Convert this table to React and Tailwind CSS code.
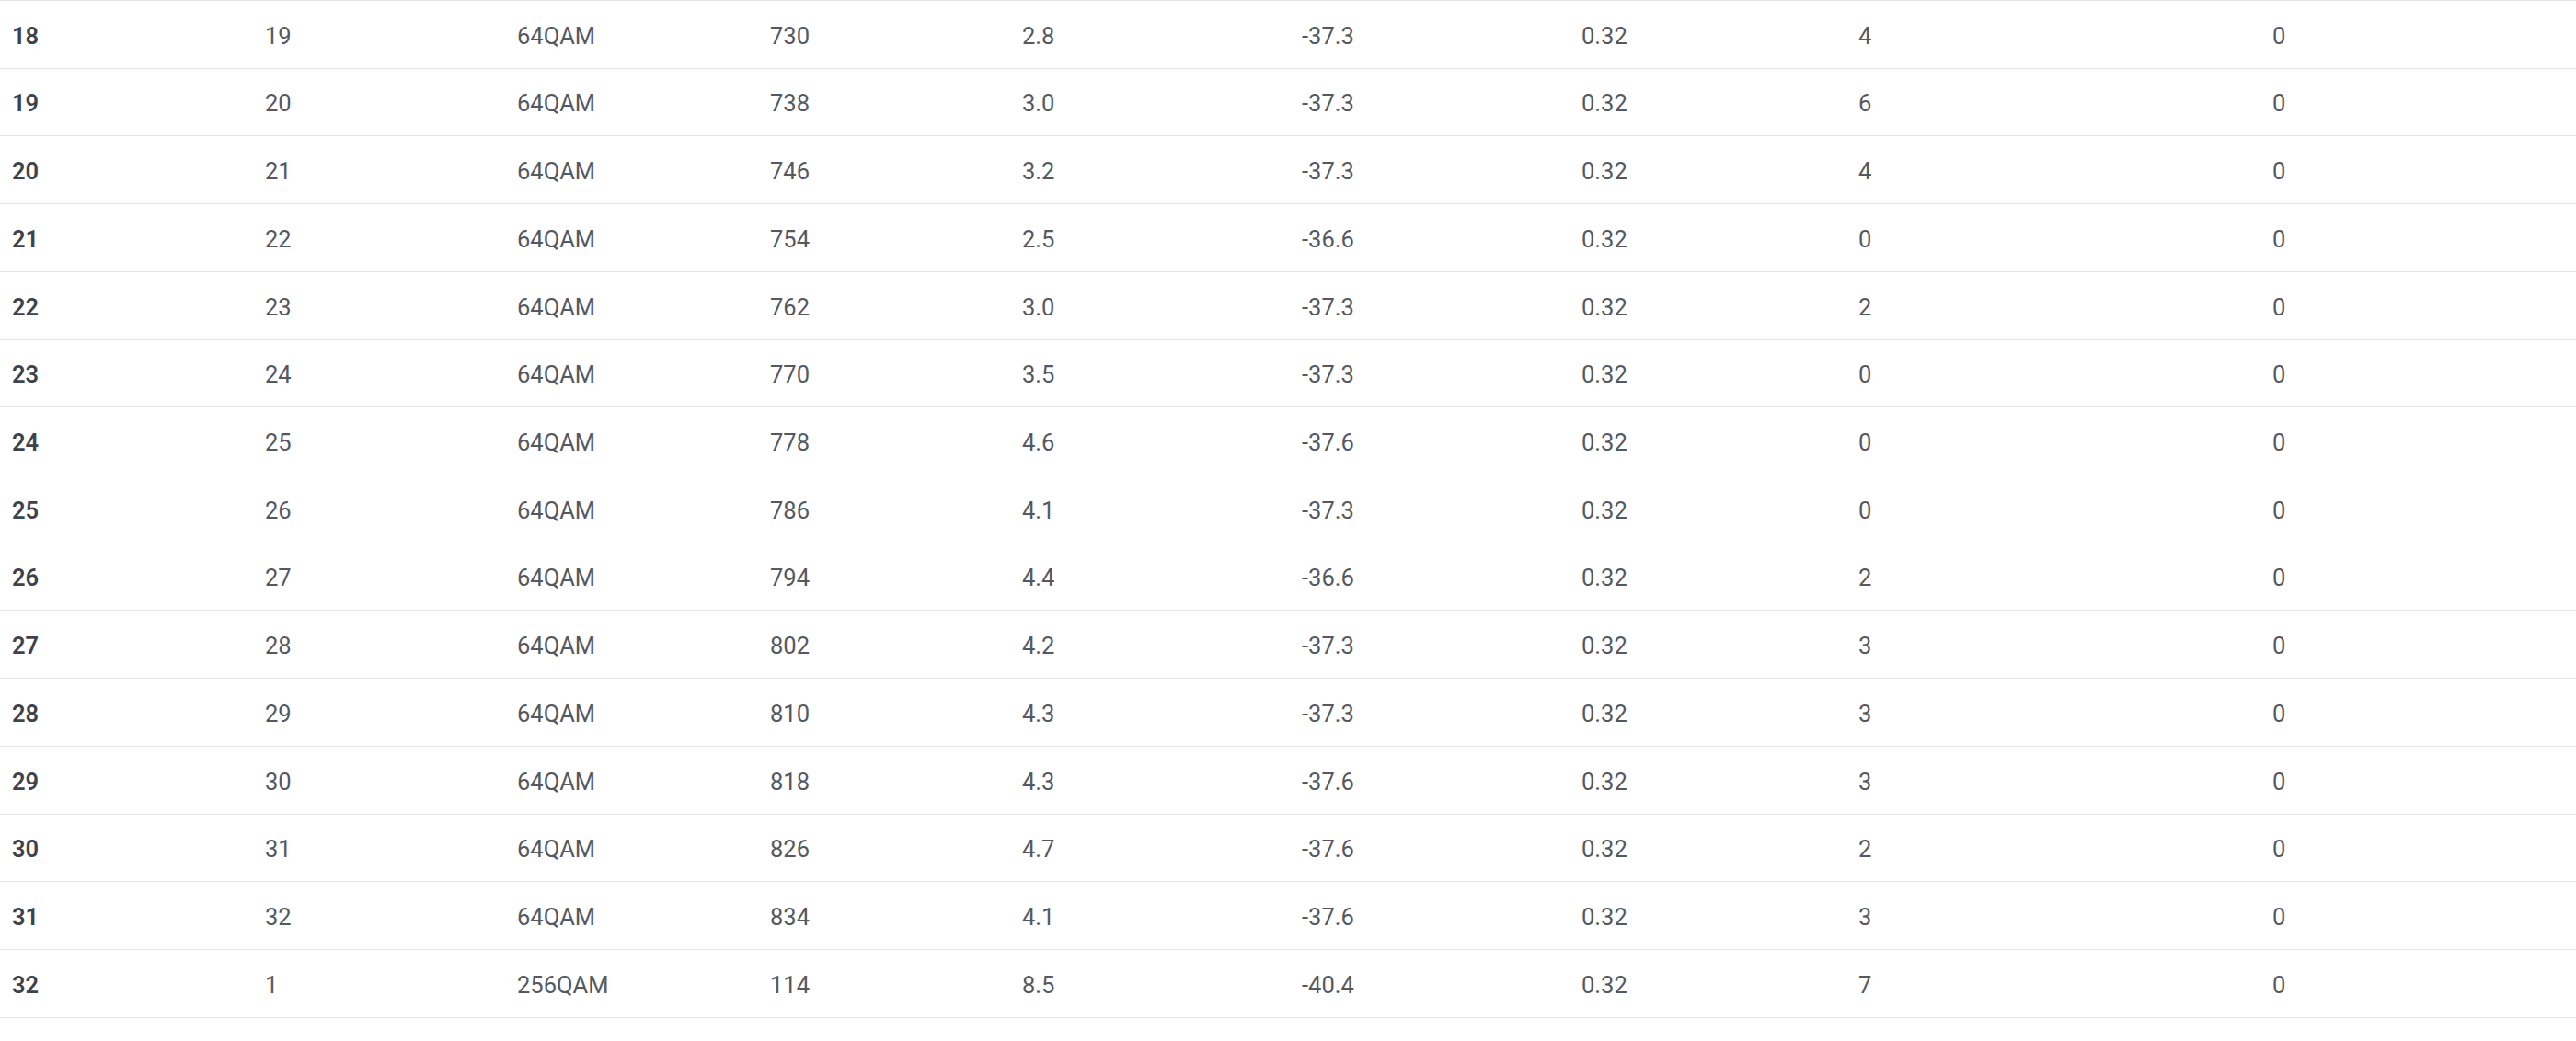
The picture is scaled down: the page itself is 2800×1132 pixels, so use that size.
import React from "react";

const rows = [
  ["18", "19", "64QAM", "730", "2.8", "-37.3", "0.32", "4", "0"],
  ["19", "20", "64QAM", "738", "3.0", "-37.3", "0.32", "6", "0"],
  ["20", "21", "64QAM", "746", "3.2", "-37.3", "0.32", "4", "0"],
  ["21", "22", "64QAM", "754", "2.5", "-36.6", "0.32", "0", "0"],
  ["22", "23", "64QAM", "762", "3.0", "-37.3", "0.32", "2", "0"],
  ["23", "24", "64QAM", "770", "3.5", "-37.3", "0.32", "0", "0"],
  ["24", "25", "64QAM", "778", "4.6", "-37.6", "0.32", "0", "0"],
  ["25", "26", "64QAM", "786", "4.1", "-37.3", "0.32", "0", "0"],
  ["26", "27", "64QAM", "794", "4.4", "-36.6", "0.32", "2", "0"],
  ["27", "28", "64QAM", "802", "4.2", "-37.3", "0.32", "3", "0"],
  ["28", "29", "64QAM", "810", "4.3", "-37.3", "0.32", "3", "0"],
  ["29", "30", "64QAM", "818", "4.3", "-37.6", "0.32", "3", "0"],
  ["30", "31", "64QAM", "826", "4.7", "-37.6", "0.32", "2", "0"],
  ["31", "32", "64QAM", "834", "4.1", "-37.6", "0.32", "3", "0"],
  ["32", "1", "256QAM", "114", "8.5", "-40.4", "0.32", "7", "0"],
];

export default function App() {
  return (
    <div
      className="w-[2800px] h-[1132px] bg-white overflow-hidden"
      style={{ fontFamily: "Roboto, 'Noto Sans', sans-serif" }}
    >
      <div className="grid grid-cols-[275px_274px_275px_274px_304px_304px_301px_450px_1fr] border-b border-[#e6e7ea]">
        {rows.map((r, i) => (
          <React.Fragment key={i}>
            {r.map((c, j) => (
              <div
                key={j}
                className={
                  "h-[73.73px] border-t border-[#e6e7ea] flex items-center pl-[13px] pt-[3px] text-[25.5px] " +
                  (j === 0 ? "font-semibold text-[#3d424b]" : "text-[#545961]")
                }
              >
                {c}
              </div>
            ))}
          </React.Fragment>
        ))}
      </div>
    </div>
  );
}
